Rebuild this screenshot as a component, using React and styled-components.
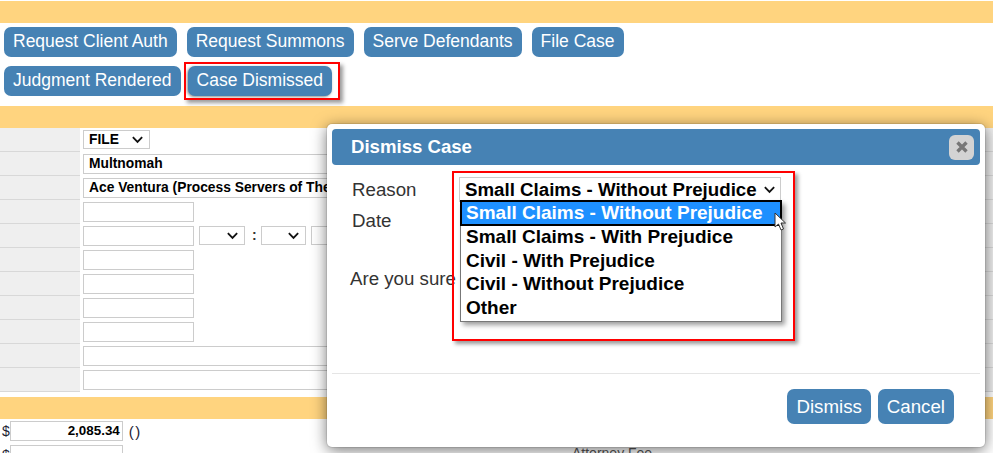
import React from 'react'
import styled, { createGlobalStyle } from 'styled-components'

const GlobalStyle = createGlobalStyle`
  html, body {
    margin: 0;
    padding: 0;
    background: #fff;
    overflow: hidden;
  }
  body {
    font-family: "Liberation Sans", Arial, sans-serif;
    width: 993px;
    height: 453px;
  }
`

const Page = styled.div`
  position: relative;
  width: 993px;
  height: 453px;
  overflow: hidden;
  padding-top: 1px;
  box-sizing: border-box;
`

const Band = styled.div`
  height: 22px;
  background: #ffd47f;
  margin-top: ${(p) => p.$top || 0}px;
`

const ActionBar = styled.div`
  display: flex;
  flex-direction: column;
  gap: 9px;
  padding: 4px 4px 10px;
`

const ActionRow = styled.div`
  display: flex;
  gap: ${(p) => p.$gap}px;
`

const Action = styled.button`
  height: 30px;
  padding: 0 9px 2px;
  border: none;
  border-radius: 7px;
  background: #4682b4;
  color: #fff;
  font-family: inherit;
  font-size: 17.5px;
  white-space: nowrap;
  box-shadow: ${(p) => (p.$marked ? '-1px 1px 3px rgba(0, 0, 0, 0.45)' : 'none')};
`

const DetailTable = styled.div`
  display: grid;
  grid-template-columns: 80px 1fr 30px;
  grid-auto-rows: 24px;
`

const RowLabel = styled.div`
  background: #efefef;
  border-bottom: 1px solid #d8d8d8;
  box-sizing: border-box;
`

const RowValue = styled.div`
  display: flex;
  align-items: flex-start;
  gap: 5px;
  padding: 2px 0 0 3px;
  box-sizing: border-box;
`

const Field = styled.div`
  width: ${(p) => p.$w || 111}px;
  height: 20px;
  border: 1px solid #cccccc;
  box-sizing: border-box;
  background: #fff;
  font-size: 13.8px;
  font-weight: bold;
  line-height: 18px;
  padding-left: 5px;
  color: #000;
  white-space: nowrap;
  overflow: hidden;
`

const SelectBox = styled(Field)`
  display: flex;
  align-items: center;
  justify-content: space-between;
  padding-right: 5px;
  height: 19px;
`

const Colon = styled.span`
  margin: 0 -1px 0 2px;
  font-size: 14px;
  font-weight: bold;
  line-height: 19px;
  color: #333;
`

const TotalsRow = styled.div`
  display: flex;
  align-items: center;
  height: 24px;
  padding-left: 2px;
  font-size: 14px;
  color: #223;
`

const Amount = styled(Field)`
  text-align: right;
  padding: 0 2px 0 0;
  width: 113px;
  font-size: 13.4px;
`

const Parens = styled.span`
  margin-left: 6px;
  font-size: 15px;
  letter-spacing: 1.5px;
`

const AttorneyFee = styled.div`
  position: absolute;
  left: 572px;
  top: 445px;
  font-size: 14px;
  color: #555;
`

const Modal = styled.div`
  position: absolute;
  left: 327px;
  top: 124px;
  width: 658px;
  height: 323px;
  padding: 5px;
  box-sizing: border-box;
  display: flex;
  flex-direction: column;
  background: #fff;
  border-radius: 5px;
  box-shadow: 0 0 0 1px rgba(0, 0, 0, 0.08), 0 3px 15px rgba(0, 0, 0, 0.55);
`

const ModalHeader = styled.div`
  display: flex;
  align-items: center;
  justify-content: space-between;
  height: 36px;
  flex-shrink: 0;
  padding: 0 6px 0 19px;
  background: #4682b4;
  border-radius: 4px;
  color: #fff;
  font-size: 18.6px;
  font-weight: bold;
`

const CloseButton = styled.div`
  width: 25px;
  height: 25px;
  display: flex;
  align-items: center;
  justify-content: center;
  border-radius: 6px;
  background: #d3d3d3;
`

const ModalBody = styled.div`
  flex: 1;
  padding: 14px 0 0 20px;
  color: #333;
  font-size: 18.7px;
  border-bottom: 1px solid #e5e5e5;
`

const FormRow = styled.div`
  height: 31px;
  line-height: 21px;
`

const Confirm = styled.div`
  margin-top: 27px;
  margin-left: -2px;
`

const ModalFooter = styled.div`
  display: flex;
  justify-content: flex-end;
  gap: 7px;
  height: 68px;
  padding: 15px 26px 0 0;
  box-sizing: border-box;
  flex-shrink: 0;
`

const FooterButton = styled.button`
  height: 35px;
  padding: 0 9px;
  border: none;
  border-radius: 7px;
  background: #4682b4;
  color: #fff;
  font-family: inherit;
  font-size: 18.7px;
`

const Highlight = styled.div`
  position: absolute;
  box-sizing: border-box;
  border: 2px solid #f00;
  box-shadow: 3px 3px 4px rgba(0, 0, 0, 0.4);
  left: ${(p) => p.$x}px;
  top: ${(p) => p.$y}px;
  width: ${(p) => p.$w}px;
  height: ${(p) => p.$h}px;
`

const ReasonSelect = styled.div`
  position: absolute;
  left: 459px;
  top: 177px;
  width: 322px;
  height: 25px;
  box-sizing: border-box;
  display: flex;
  align-items: center;
  justify-content: space-between;
  padding: 0 4px 0 5px;
  background: #fff;
  border: 1px solid #ccc;
  font-size: 18.7px;
  font-weight: bold;
  color: #000;
  white-space: nowrap;
`

const OptionList = styled.div`
  position: absolute;
  left: 460px;
  top: 201px;
  width: 322px;
  height: 121px;
  box-sizing: border-box;
  background: #fff;
  border: 1px solid #777;
  border-top: none;
  box-shadow: 3px 3px 5px rgba(0, 0, 0, 0.4);
  font-size: 19px;
  font-weight: bold;
  color: #000;
`

const Option = styled.div`
  height: 23.8px;
  line-height: 23.8px;
  padding-left: 5px;
  white-space: nowrap;
  box-sizing: border-box;
  ${(p) =>
    p.$active &&
    `
    background: #1e90ff;
    color: #fff;
    outline: 2px solid #000;
    outline-offset: -1px;
  `}
`

const Cursor = styled.svg`
  position: absolute;
  left: 774px;
  top: 212px;
`

const Chevron = ({ size = 13 }) => (
  <svg width={size} height={size} viewBox="0 0 14 14" fill="none">
    <path d="M2 4.5 L7 9.5 L12 4.5" stroke="#111" strokeWidth="2" />
  </svg>
)

const reasons = [
  'Small Claims - Without Prejudice',
  'Small Claims - With Prejudice',
  'Civil - With Prejudice',
  'Civil - Without Prejudice',
  'Other',
]

const Row = ({ children }) => (
  <>
    <RowLabel />
    <RowValue>{children}</RowValue>
    <RowLabel />
  </>
)

export default function App() {
  return (
    <Page>
      <GlobalStyle />
      <Band />
      <ActionBar>
        <ActionRow $gap={10}>
          <Action>Request Client Auth</Action>
          <Action>Request Summons</Action>
          <Action>Serve Defendants</Action>
          <Action>File Case</Action>
        </ActionRow>
        <ActionRow $gap={7}>
          <Action>Judgment Rendered</Action>
          <Action $marked>Case Dismissed</Action>
        </ActionRow>
      </ActionBar>
      <Band />
      <DetailTable>
        <Row><SelectBox $w={67}>FILE <Chevron /></SelectBox></Row>
        <Row><Field $w={400}>Multnomah</Field></Row>
        <Row><Field $w={400}>Ace Ventura (Process Servers of The</Field></Row>
        <Row><Field /></Row>
        <Row>
          <Field />
          <SelectBox $w={46}><span /><Chevron /></SelectBox>
          <Colon>:</Colon>
          <SelectBox $w={45}><span /><Chevron /></SelectBox>
          <SelectBox $w={45} />
        </Row>
        <Row><Field /></Row>
        <Row><Field /></Row>
        <Row><Field /></Row>
        <Row><Field /></Row>
        <Row><Field $w={500} /></Row>
        <Row><Field $w={500} /></Row>
      </DetailTable>
      <Band $top={5} />
      <TotalsRow>$<Amount>2,085.34</Amount><Parens>()</Parens></TotalsRow>
      <TotalsRow>$<Amount /></TotalsRow>
      <AttorneyFee>Attorney Fee</AttorneyFee>

      <Highlight $x={184} $y={62} $w={156} $h={38} />

      <Modal>
        <ModalHeader>
          Dismiss Case
          <CloseButton>
            <svg width="14" height="14" viewBox="0 0 14 14">
              <path d="M2.5 2.5 L11.5 11.5 M11.5 2.5 L2.5 11.5" stroke="#777" strokeWidth="3.4" />
            </svg>
          </CloseButton>
        </ModalHeader>
        <ModalBody>
          <FormRow>Reason</FormRow>
          <FormRow>Date</FormRow>
          <Confirm>Are you sure</Confirm>
        </ModalBody>
        <ModalFooter>
          <FooterButton>Dismiss</FooterButton>
          <FooterButton>Cancel</FooterButton>
        </ModalFooter>
      </Modal>

      <Highlight $x={452} $y={171} $w={343} $h={170} />
      <ReasonSelect>
        Small Claims - Without Prejudice <Chevron />
      </ReasonSelect>
      <OptionList>
        {reasons.map((r, i) => (
          <Option key={r} $active={i === 0}>{r}</Option>
        ))}
      </OptionList>
      <Cursor width="13" height="20" viewBox="0 0 13 20">
        <path d="M1 1 L1 15 L4.5 12 L7 18 L9.5 17 L7 11 L11.5 11 Z" fill="#fff" stroke="#333" strokeWidth="1" />
      </Cursor>
    </Page>
  )
}
